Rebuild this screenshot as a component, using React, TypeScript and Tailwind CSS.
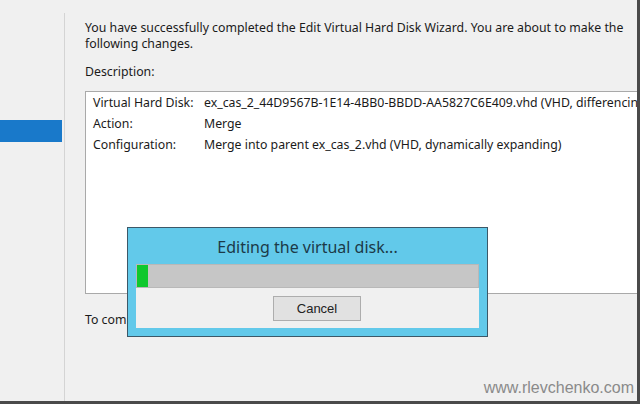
const ROWS = [
  ["Virtual Hard Disk:", "ex_cas_2_44D9567B-1E14-4BB0-BBDD-AA5827C6E409.vhd (VHD, differencing)"],
  ["Action:", "Merge"],
  ["Configuration:", "Merge into parent ex_cas_2.vhd (VHD, dynamically expanding)"],
];

export default function App() {
  return (
    <div className="w-[644px] h-[406px] bg-white overflow-hidden font-['Noto_Sans',sans-serif] text-[12.3px] text-[#1a1a1a]">
      <div className="relative w-[640px] h-[404px] bg-[#f0f0f0] border-r-[3px] border-b-[3px] border-[#4a4a4a] flex overflow-hidden">
        {/* left nav */}
        <div className="w-[64px] shrink-0 pt-[120px]">
          <div className="w-[62px] h-[22px] bg-[#1979ca]" />
        </div>
        <div className="w-px mt-[13px] bg-[#d4d4d4] shrink-0" />

        {/* page */}
        <div className="flex-1 pl-[20px] pt-[20px] min-w-0">
          <p className="leading-[16px] whitespace-nowrap">
            You have successfully completed the Edit Virtual Hard Disk Wizard. You are about to make the
          </p>
          <p className="leading-[16px]">following changes.</p>
          <p className="mt-[12px] leading-[16px]">Description:</p>
          <div className="mt-[11px] h-[203px] bg-white border border-[#a9a9a9] border-r-0 pl-[7px] pt-[1px] overflow-hidden">
            {ROWS.map(([k, v]) => (
              <div key={k} className="flex h-[21px] items-center whitespace-nowrap">
                <span className="w-[111px] shrink-0">{k}</span>
                <span>{v}</span>
              </div>
            ))}
          </div>
          <p className="mt-[18px] leading-[16px]">To complete the merge, click Finish.</p>
        </div>

        {/* progress window */}
        <div className="absolute left-[127px] top-[227px] w-[361px] h-[110px] bg-[#62c9ea] border border-[#3c5868] px-[8px] flex flex-col">
          <div className="h-[36px] pt-[2px] flex items-center justify-center text-[16px] text-[#1c3a48]">
            Editing the virtual disk...
          </div>
          <div className="h-[24px] bg-[#c6c6c6] border border-[#b8b8b8] flex">
            <div className="w-[11px] bg-[#0fc82d]" />
          </div>
          <div className="h-[40px] bg-[#f0f0f0] flex items-start pl-[137px] pt-[8px]">
            <div className="w-[88px] h-[25px] bg-[#e1e1e1] border border-[#adadad] flex items-center justify-center font-['Liberation_Sans',sans-serif] text-[13px] text-[#222]">
              Cancel
            </div>
          </div>
        </div>

        <div className="absolute right-[3px] bottom-[4px] font-['Liberation_Sans',sans-serif] text-[16px] leading-[18px] text-[#8a8a8a]">
          www.rlevchenko.com
        </div>
      </div>
    </div>
  );
}
